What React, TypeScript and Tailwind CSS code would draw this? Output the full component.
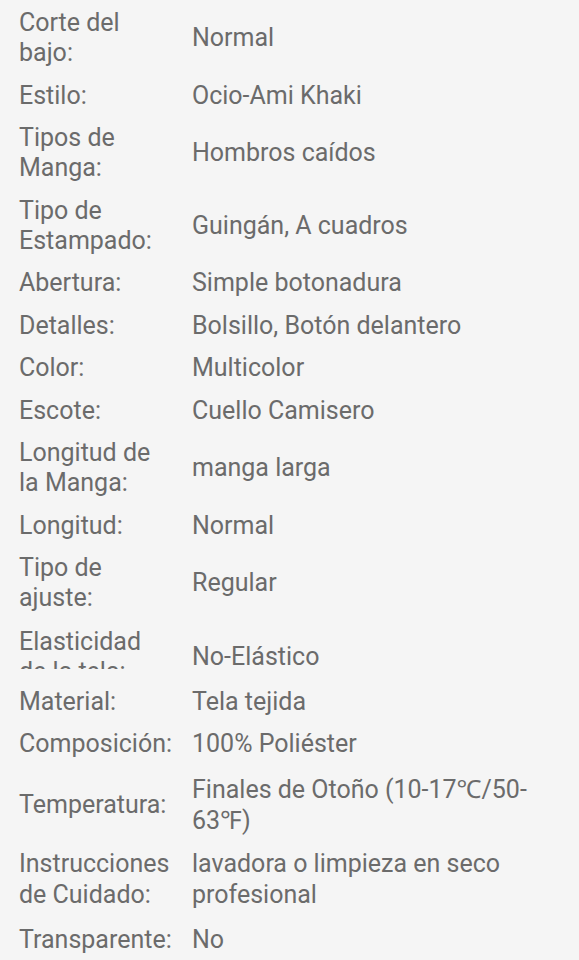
import React from "react";

type Row = { label: string; value: string; special?: boolean; cls?: string };

const rows: Row[] = [
  { label: "Corte del bajo:", value: "Normal" },
  { label: "Estilo:", value: "Ocio-Ami Khaki" },
  { label: "Tipos de Manga:", value: "Hombros caídos" },
  { label: "Tipo de Estampado:", value: "Guingán, A cuadros" },
  { label: "Abertura:", value: "Simple botonadura" },
  { label: "Detalles:", value: "Bolsillo, Botón delantero" },
  { label: "Color:", value: "Multicolor" },
  { label: "Escote:", value: "Cuello Camisero" },
  { label: "Longitud de la Manga:", value: "manga larga" },
  { label: "Longitud:", value: "Normal" },
  { label: "Tipo de ajuste:", value: "Regular" },
  { label: "Elasticidad de la tela:", value: "No-Elástico", special: true },
  { label: "Material:", value: "Tela tejida" },
  { label: "Composición:", value: "100% Poliéster" },
  {
    label: "Temperatura:",
    value: "Finales de Otoño (10-17℃/50-63℉)",
    cls: "pt-[8.25px] pb-[5.5px] leading-[31px]",
  },
  {
    label: "Instrucciones de Cuidado:",
    value: "lavadora o limpieza en seco profesional",
    cls: "pt-[6.5px] pb-[7px] leading-[31px]",
  },
  { label: "Transparente:", value: "No", cls: "pt-[7px] pb-[6px] leading-[31px]" },
];

export default function App() {
  return (
    <div
      className="min-h-[960px] w-full bg-[#f5f5f5] pl-[19px] pr-[19px] pt-[2px] text-[25px] leading-[30px] text-[#6b6b6b]"
      style={{ fontFamily: "Roboto, 'Noto Sans', sans-serif" }}
    >
      {rows.map((r) =>
        r.special ? (
          <div key={r.label} className="flex h-[61px] items-start gap-[20px]">
            <div className="mt-[7.3px] h-[42px] w-[153px] shrink-0 overflow-hidden">{r.label}</div>
            <div className="mt-[22.3px] min-w-0 flex-1">{r.value}</div>
          </div>
        ) : (
          <div
            key={r.label}
            className={`flex items-center gap-[20px] ${r.cls ?? "py-[6.25px]"}`}
          >
            <div className="w-[153px] shrink-0">{r.label}</div>
            <div className="min-w-0 flex-1">{r.value}</div>
          </div>
        )
      )}
    </div>
  );
}
